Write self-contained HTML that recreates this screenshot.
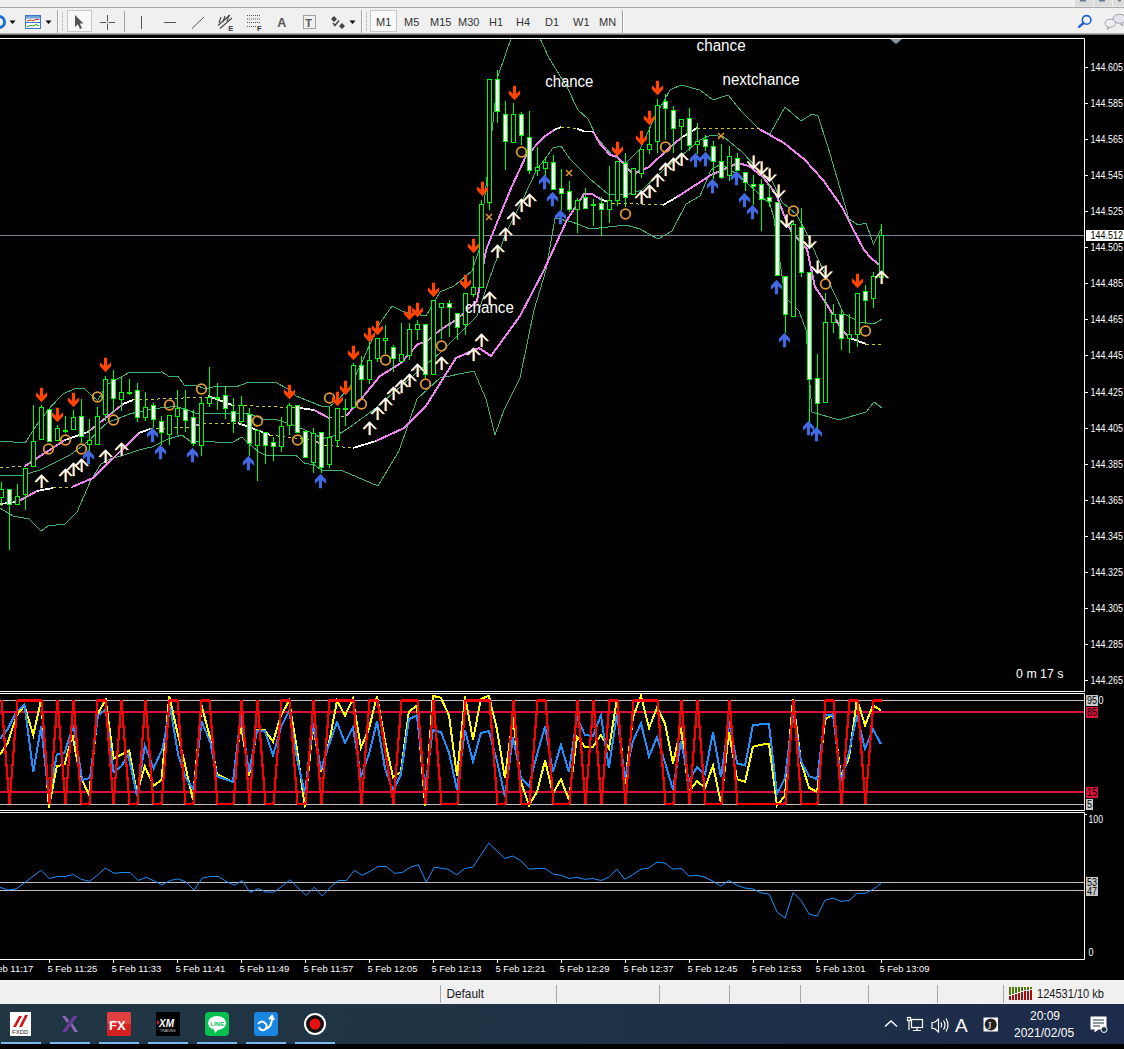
<!DOCTYPE html>
<html><head><meta charset="utf-8">
<style>
html,body{margin:0;padding:0;background:#000;width:1124px;height:1049px;overflow:hidden;position:relative;font-family:"Liberation Sans",sans-serif;}
.abs{position:absolute}
#tb{position:absolute;left:0;top:0;width:1124px;height:35px;background:#f0f0f0;}
#tb .topline{position:absolute;left:0;top:7px;width:1124px;height:1px;background:#a8a8a8}
#tb .bot{position:absolute;left:0;top:33px;width:1124px;height:2px;background:linear-gradient(#c8c8c8,#606060)}
.tf{position:absolute;top:16px;font-size:11px;color:#333;}
#chart{position:absolute;left:0;top:0}
.pl{position:absolute;left:1090px;font-size:10px;color:#fff;height:12px;line-height:12px;}
.tl{position:absolute;top:962px;font-size:10px;color:#fff;line-height:12px;white-space:nowrap}
.txt{position:absolute;color:#fff;font-size:16px;line-height:16px;white-space:nowrap}
#sb{position:absolute;left:0;top:980px;width:1124px;height:24px;background:#f0f0f0}
#sb .sep{position:absolute;top:5px;width:1px;height:18px;background:#a8a8a8}
#task{position:absolute;left:0;top:1004px;width:1124px;height:40px;background:linear-gradient(90deg,#213643 0%,#1f3346 50%,#1c2b4b 100%)}
</style></head><body>
<div id="tb">
  <div class="topline"></div>
  <div class="bot"></div>
  <svg class="abs" style="left:0;top:0" width="1124" height="35">
    <!-- left partial blue ring icon -->
    <circle cx="-1" cy="22" r="5.5" fill="none" stroke="#1f6fd0" stroke-width="3"/>
    <path d="M9.5,20.5h6l-3,3.5z" fill="#000"/>
    <!-- chart icon -->
    <rect x="25.5" y="15.5" width="15" height="13" fill="#fff" stroke="#3c78c8" stroke-width="1"/>
    <rect x="26" y="16" width="14" height="2.5" fill="#6fa0dc"/>
    <line x1="26" y1="22.5" x2="40" y2="22.5" stroke="#3c78c8" stroke-width="1"/>
    <polyline points="27,21 30,20 33,20.5 36,19.5 39,19.5" fill="none" stroke="#c03020" stroke-width="1"/>
    <polyline points="27,27 30,25.5 33,26 36,24.5 39,26" fill="none" stroke="#20a020" stroke-width="1"/>
    <path d="M45.5,20.5h6l-3,3.5z" fill="#000"/>
    <!-- separators -->
    <line x1="57.5" y1="10" x2="57.5" y2="33" stroke="#a0a0a0"/>
    <line x1="58.5" y1="10" x2="58.5" y2="33" stroke="#fff"/>
    <line x1="62.5" y1="12" x2="62.5" y2="31" stroke="#a8a8a8" stroke-dasharray="1,1"/>
    <rect x="67.5" y="10.5" width="24" height="21" fill="#f8f8f8" stroke="#c8c8c8"/>
    <path d="M75,15 L75,27 L77.8,24.3 L80,29 L82,28 L79.8,23.5 L83.5,23.5 Z" fill="#555"/>
    <path d="M100,22.5h15M107.5,15v15" stroke="#555" stroke-width="1"/>
    <rect x="106.5" y="21.5" width="2" height="2" fill="#f0f0f0"/>
    <line x1="124.5" y1="11" x2="124.5" y2="32" stroke="#a0a0a0"/>
    <line x1="141.5" y1="16" x2="141.5" y2="29" stroke="#555"/>
    <line x1="164" y1="22.5" x2="176" y2="22.5" stroke="#555"/>
    <line x1="192" y1="28.5" x2="204" y2="17" stroke="#555"/>
    <g stroke="#4a4a4a" stroke-width="1.2" fill="none">
      <path d="M218,25.5L230,15M220,28.5L232,18"/>
      <path d="M221,17l-2,6M225,16l-2,6M229,15l-2,6"/>
    </g>
    <text x="228.3" y="31" font-size="7.5" font-weight="bold" fill="#333" font-family="Liberation Sans">E</text>
    <g stroke="#555" stroke-width="1" stroke-dasharray="1,1">
      <line x1="247" y1="15.5" x2="260" y2="15.5"/><line x1="247" y1="19" x2="260" y2="19"/><line x1="247" y1="22.5" x2="260" y2="22.5"/><line x1="247" y1="26.5" x2="256" y2="26.5"/>
    </g>
    <text x="257" y="31" font-size="7.5" font-weight="bold" fill="#333" font-family="Liberation Sans">F</text>
    <text x="277.3" y="27.2" font-size="12.5" fill="#555" font-family="Liberation Sans" font-weight="bold">A</text>
    <rect x="303.5" y="15.5" width="12" height="13" fill="none" stroke="#555" stroke-dasharray="1,1"/>
    <text x="305.2" y="26.8" font-size="11" fill="#555" font-family="Liberation Sans" font-weight="bold">T</text>
    <path d="M334,16l3,3l-3,3l-3,-3z M342,23l3,3l-3,3l-3,-3z" fill="#444"/>
    <path d="M333,23l2,2.5l4,-5" fill="none" stroke="#444" stroke-width="1.5"/>
    <path d="M349.5,20.5h6l-3,3.5z" fill="#000"/>
    <line x1="361.5" y1="10" x2="361.5" y2="33" stroke="#a0a0a0"/>
    <line x1="362.5" y1="10" x2="362.5" y2="33" stroke="#fff"/>
    <line x1="366.5" y1="12" x2="366.5" y2="31" stroke="#a8a8a8" stroke-dasharray="1,1"/>
    <rect x="370.5" y="10.5" width="26" height="21" fill="#f8f8f8" stroke="#c8c8c8"/>
    <line x1="622.5" y1="10" x2="622.5" y2="33" stroke="#a0a0a0"/>
    <line x1="623.5" y1="10" x2="623.5" y2="33" stroke="#fff"/>
    <!-- window buttons -->
    <rect x="1075" y="0" width="18" height="6.5" fill="#dcdcdc"/>
    <rect x="1094" y="0" width="18" height="6.5" fill="#dcdcdc"/>
    <rect x="1113" y="0" width="11" height="6.5" fill="#dcdcdc"/>
    <rect x="1080" y="0" width="6" height="1.5" fill="#6a7a90"/>
    <rect x="1099" y="0" width="6" height="1.5" fill="#6a7a90"/>
    <rect x="1118" y="0" width="3" height="1.5" fill="#6a7a90"/>
    <!-- magnifier -->
    <circle cx="1086.6" cy="19.9" r="4.3" fill="none" stroke="#1f5fd6" stroke-width="1.6"/>
    <line x1="1083.5" y1="23" x2="1079" y2="26.8" stroke="#1f5fd6" stroke-width="2.4" stroke-linecap="round"/>
    <!-- chat bubbles -->
    <ellipse cx="1119.5" cy="18.8" rx="6.5" ry="4.5" fill="#e4e4ec" stroke="#a0a0a8"/>
    <path d="M1122,23l1,3l-3,-2" fill="#e4e4ec" stroke="#a0a0a8"/>
    <ellipse cx="1110.3" cy="23.2" rx="5.2" ry="4" fill="#f0f0f4" stroke="#a0a0a8"/>
    <path d="M1108,27l-1,2.5l3,-2" fill="#f0f0f4" stroke="#a0a0a8"/>
  </svg>
  <div class="tf" style="left:376px">M1</div>
  <div class="tf" style="left:404px">M5</div>
  <div class="tf" style="left:430px">M15</div>
  <div class="tf" style="left:458px">M30</div>
  <div class="tf" style="left:489px">H1</div>
  <div class="tf" style="left:516px">H4</div>
  <div class="tf" style="left:545px">D1</div>
  <div class="tf" style="left:573px">W1</div>
  <div class="tf" style="left:599px">MN</div>
</div>
<svg id="chart" width="1124" height="1049" viewBox="0 0 1124 1049">
<defs><clipPath id="cm"><rect x="0" y="39" width="1084" height="652"/></clipPath><clipPath id="c2"><rect x="0" y="694" width="1084" height="116"/></clipPath></defs>
<g clip-path="url(#cm)">
<line x1="0" y1="235.5" x2="1084" y2="235.5" stroke="#778899" stroke-width="1"/>
<polyline points="0,441 25,443 38,423 51.5,406 63,394 76,388 84,388 91,395 97.6,400.5 102.4,392.4 108,384 115,380 121.5,377 129,372.4 162,372 169,376.5 178,376.5 185,386 195,385 206,389 217,386 237,386.6 248,382.3 259,383 275.5,382.3 288,389 296,396 321,406 330,406 337,401 350,387 362,362 378,326 392,306 404,312 426,316 440,292 454,286 472,271 479,250 498,76 512,36 539,36 549,58 567,87 578,110 588,119 597,138 613,156 626,163 640,149 654,119 670,90 681,85 700,90 713,100 728,95 742,112 759,129 770,134 785,107 801,121 812,114 818,116 828,147 849,219 858,225 866,223 873.5,244 881,229" fill="none" stroke="#3cb371" stroke-width="1" shape-rendering="crispEdges"/>
<polyline points="0,475 20,476 40,470 70,455 89,441 98.6,430.5 108,422 119.6,418 131,413.4 140,412 152,408.7 176,406.5 185,409 195,413 217,413 237,413 250,414 264,419.5 275,419.5 288,423 298,427 311,432.6 322,438.4 330,437.2 341.5,432.6 350,427 376,408 408,380 440,353 477,316 489,280 506,233 523,199 537,169 545,159 553,148 561,146 570,159 574,163 590,179 608,194 626,195 642,190 663,170 681,156 700,140 711,135 724,137 742,152 757,168 772,181 782,202 797,215 808,236 817,257 844,314 860,322 874,324 882,319" fill="none" stroke="#3cb371" stroke-width="1" shape-rendering="crispEdges"/>
<polyline points="0,508 13,516 29,519 41,531 48,526 65,524 77,512 91,480 101,464 110,459 123.4,455.3 140,449.6 152,447 168,439 182,435 190,441 215,442 233,442 242,437 249.5,444 259,452 267,456 296,455.5 305,463.5 314,464.7 322,470.4 341.5,470.4 350,474 378,486 399,451 417,399 440,378 474,371 486,399 495,435 504,410 520,378 534,310 546,270 555,218 572,222 590,229 608,227 626,225 640,229 658,239 672,231 686,204 700,196 711,170 721,164 738,175 757,192 770,204 774,219 785,297 799,311 806,330 812,412 839,420 866,412 874,402 882,408" fill="none" stroke="#3cb371" stroke-width="1" shape-rendering="crispEdges"/>
<polyline points="0,468 25,466" fill="none" stroke="#c8c832" stroke-width="1" stroke-dasharray="3,3" shape-rendering="crispEdges"/>
<polyline points="25,466 65,440" fill="none" stroke="#ee82ee" stroke-width="2" shape-rendering="crispEdges"/>
<polyline points="65,440 88,432" fill="none" stroke="#ffffff" stroke-width="1.8" shape-rendering="crispEdges"/>
<polyline points="88,432 123,404" fill="none" stroke="#ee82ee" stroke-width="2" shape-rendering="crispEdges"/>
<polyline points="123,404 133,400" fill="none" stroke="#ffffff" stroke-width="1.8" shape-rendering="crispEdges"/>
<polyline points="133,400 208,397" fill="none" stroke="#c8c832" stroke-width="1" stroke-dasharray="3,3" shape-rendering="crispEdges"/>
<polyline points="208,396 232,405" fill="none" stroke="#ffffff" stroke-width="1.8" shape-rendering="crispEdges"/>
<polyline points="232,405 300,408" fill="none" stroke="#c8c832" stroke-width="1" stroke-dasharray="3,3" shape-rendering="crispEdges"/>
<polyline points="300,408 314,410" fill="none" stroke="#ffffff" stroke-width="1.8" shape-rendering="crispEdges"/>
<polyline points="314,410 329,418" fill="none" stroke="#ee82ee" stroke-width="2" shape-rendering="crispEdges"/>
<polyline points="329,418 346,416" fill="none" stroke="#c8c832" stroke-width="1" stroke-dasharray="3,3" shape-rendering="crispEdges"/>
<polyline points="346,416 362,398 380,376 401,363 418,344 426,342 440,330 456,320 464,313 477,301 486,250 498,220 512,186 526,156 544,137 554,130" fill="none" stroke="#ee82ee" stroke-width="2" shape-rendering="crispEdges"/>
<polyline points="554,130 561,127" fill="none" stroke="#ffffff" stroke-width="1.8" shape-rendering="crispEdges"/>
<polyline points="561,127 577,128.6" fill="none" stroke="#c8c832" stroke-width="1" stroke-dasharray="3,3" shape-rendering="crispEdges"/>
<polyline points="577,128.6 584,131.5 593,131.5" fill="none" stroke="#ffffff" stroke-width="1.8" shape-rendering="crispEdges"/>
<polyline points="593,131.5 600.5,144.4 610,155 617,156.4 633,174 649,167 668,149 681,138" fill="none" stroke="#ee82ee" stroke-width="2" shape-rendering="crispEdges"/>
<polyline points="681,138 697,128" fill="none" stroke="#ffffff" stroke-width="1.8" shape-rendering="crispEdges"/>
<polyline points="697,128 760,128" fill="none" stroke="#c8c832" stroke-width="1" stroke-dasharray="3,3" shape-rendering="crispEdges"/>
<polyline points="759,129 784,143 805,160 823,180 842,207 851,225 864,250 871,258 882,267" fill="none" stroke="#ee82ee" stroke-width="2" shape-rendering="crispEdges"/>
<polyline points="0,504 17,502" fill="none" stroke="#ffffff" stroke-width="1.8" shape-rendering="crispEdges"/>
<polyline points="17,502 37,491" fill="none" stroke="#ee82ee" stroke-width="2" shape-rendering="crispEdges"/>
<polyline points="37,491 53,488" fill="none" stroke="#ffffff" stroke-width="1.8" shape-rendering="crispEdges"/>
<polyline points="53,488 72,487" fill="none" stroke="#c8c832" stroke-width="1" stroke-dasharray="3,3" shape-rendering="crispEdges"/>
<polyline points="72,487 93,478 139,433" fill="none" stroke="#ee82ee" stroke-width="2" shape-rendering="crispEdges"/>
<polyline points="139,433 150,429" fill="none" stroke="#ffffff" stroke-width="1.8" shape-rendering="crispEdges"/>
<polyline points="150,429 192,427" fill="none" stroke="#c8c832" stroke-width="1" stroke-dasharray="3,3" shape-rendering="crispEdges"/>
<polyline points="192,427 203,423" fill="none" stroke="#ee82ee" stroke-width="2" shape-rendering="crispEdges"/>
<polyline points="203,423 238,423" fill="none" stroke="#c8c832" stroke-width="1" stroke-dasharray="3,3" shape-rendering="crispEdges"/>
<polyline points="238,423 270,435" fill="none" stroke="#ffffff" stroke-width="1.8" shape-rendering="crispEdges"/>
<polyline points="270,435 312,440" fill="none" stroke="#c8c832" stroke-width="1" stroke-dasharray="3,3" shape-rendering="crispEdges"/>
<polyline points="312,440 324,445" fill="none" stroke="#ee82ee" stroke-width="2" shape-rendering="crispEdges"/>
<polyline points="324,445 353,448" fill="none" stroke="#c8c832" stroke-width="1" stroke-dasharray="3,3" shape-rendering="crispEdges"/>
<polyline points="353,448 376,441" fill="none" stroke="#ffffff" stroke-width="1.8" shape-rendering="crispEdges"/>
<polyline points="376,441 404,428 426,406 456,358 479,348 491,356 520,316 544,270 567,220 584,194 592,194 602,200" fill="none" stroke="#ee82ee" stroke-width="2" shape-rendering="crispEdges"/>
<polyline points="602,200 610,202" fill="none" stroke="#ffffff" stroke-width="1.8" shape-rendering="crispEdges"/>
<polyline points="612,203 663,205" fill="none" stroke="#c8c832" stroke-width="1" stroke-dasharray="3,3" shape-rendering="crispEdges"/>
<polyline points="663,205 677,197" fill="none" stroke="#ffffff" stroke-width="1.8" shape-rendering="crispEdges"/>
<polyline points="677,197 711,175 738,163 749,166 763,177 776,194 784,215 791,231 807,249 815,287 826,303 842,330 850,338" fill="none" stroke="#ee82ee" stroke-width="2" shape-rendering="crispEdges"/>
<polyline points="850,338 866,344" fill="none" stroke="#ffffff" stroke-width="1.8" shape-rendering="crispEdges"/>
<polyline points="866,344 882,344" fill="none" stroke="#c8c832" stroke-width="1" stroke-dasharray="3,3" shape-rendering="crispEdges"/>
<line x1="1.5" y1="482" x2="1.5" y2="506" stroke="#00ff00" stroke-width="1"/>
<rect x="-0.5" y="489.5" width="4" height="8" fill="#000000" stroke="#00ff00" stroke-width="1"/>
<line x1="9.5" y1="489" x2="9.5" y2="550" stroke="#00ff00" stroke-width="1"/>
<rect x="7.5" y="489.5" width="4" height="15" fill="#ffffff" stroke="#00ff00" stroke-width="1"/>
<line x1="17.5" y1="484" x2="17.5" y2="505" stroke="#00ff00" stroke-width="1"/>
<rect x="15.5" y="496.5" width="4" height="8" fill="#000000" stroke="#00ff00" stroke-width="1"/>
<line x1="25.5" y1="468" x2="25.5" y2="510" stroke="#00ff00" stroke-width="1"/>
<rect x="23.5" y="468.5" width="4" height="26" fill="#000000" stroke="#00ff00" stroke-width="1"/>
<line x1="33.5" y1="405" x2="33.5" y2="467" stroke="#00ff00" stroke-width="1"/>
<rect x="31.5" y="441.5" width="4" height="25" fill="#000000" stroke="#00ff00" stroke-width="1"/>
<line x1="41.5" y1="405" x2="41.5" y2="440" stroke="#00ff00" stroke-width="1"/>
<rect x="39.5" y="407.5" width="4" height="32" fill="#000000" stroke="#00ff00" stroke-width="1"/>
<line x1="49.5" y1="409" x2="49.5" y2="442" stroke="#00ff00" stroke-width="1"/>
<rect x="47.5" y="409.5" width="4" height="32" fill="#ffffff" stroke="#00ff00" stroke-width="1"/>
<line x1="57.5" y1="425" x2="57.5" y2="441" stroke="#00ff00" stroke-width="1"/>
<rect x="55.5" y="428.5" width="4" height="12" fill="#000000" stroke="#00ff00" stroke-width="1"/>
<line x1="65.5" y1="416" x2="65.5" y2="433" stroke="#00ff00" stroke-width="1"/>
<rect x="63.5" y="430.5" width="4" height="1" fill="#000000" stroke="#00ff00" stroke-width="1"/>
<line x1="73.5" y1="410" x2="73.5" y2="430" stroke="#00ff00" stroke-width="1"/>
<rect x="71.5" y="417.5" width="4" height="12" fill="#000000" stroke="#00ff00" stroke-width="1"/>
<line x1="81.5" y1="399" x2="81.5" y2="443" stroke="#00ff00" stroke-width="1"/>
<rect x="79.5" y="416.5" width="4" height="20" fill="#ffffff" stroke="#00ff00" stroke-width="1"/>
<line x1="89.5" y1="419" x2="89.5" y2="452" stroke="#00ff00" stroke-width="1"/>
<rect x="87.5" y="440.5" width="4" height="4" fill="#000000" stroke="#00ff00" stroke-width="1"/>
<line x1="97.5" y1="407" x2="97.5" y2="445" stroke="#00ff00" stroke-width="1"/>
<rect x="95.5" y="416.5" width="4" height="28" fill="#000000" stroke="#00ff00" stroke-width="1"/>
<line x1="105.5" y1="376" x2="105.5" y2="421" stroke="#00ff00" stroke-width="1"/>
<rect x="103.5" y="379.5" width="4" height="35" fill="#000000" stroke="#00ff00" stroke-width="1"/>
<line x1="113.5" y1="370" x2="113.5" y2="413" stroke="#00ff00" stroke-width="1"/>
<rect x="111.5" y="379.5" width="4" height="19" fill="#ffffff" stroke="#00ff00" stroke-width="1"/>
<line x1="121.5" y1="378" x2="121.5" y2="411" stroke="#00ff00" stroke-width="1"/>
<rect x="119.5" y="392.5" width="4" height="7" fill="#000000" stroke="#00ff00" stroke-width="1"/>
<line x1="129.5" y1="379" x2="129.5" y2="395" stroke="#00ff00" stroke-width="1"/>
<rect x="127.5" y="392.5" width="4" height="1" fill="#000000" stroke="#00ff00" stroke-width="1"/>
<line x1="137.5" y1="383" x2="137.5" y2="422" stroke="#00ff00" stroke-width="1"/>
<rect x="135.5" y="390.5" width="4" height="27" fill="#ffffff" stroke="#00ff00" stroke-width="1"/>
<line x1="145.5" y1="392" x2="145.5" y2="421" stroke="#00ff00" stroke-width="1"/>
<rect x="143.5" y="407.5" width="4" height="10" fill="#000000" stroke="#00ff00" stroke-width="1"/>
<line x1="153.5" y1="403" x2="153.5" y2="428" stroke="#00ff00" stroke-width="1"/>
<rect x="151.5" y="405.5" width="4" height="14" fill="#ffffff" stroke="#00ff00" stroke-width="1"/>
<line x1="161.5" y1="416" x2="161.5" y2="445" stroke="#00ff00" stroke-width="1"/>
<rect x="159.5" y="421.5" width="4" height="11" fill="#ffffff" stroke="#00ff00" stroke-width="1"/>
<line x1="169.5" y1="415" x2="169.5" y2="445" stroke="#00ff00" stroke-width="1"/>
<rect x="167.5" y="415.5" width="4" height="19" fill="#000000" stroke="#00ff00" stroke-width="1"/>
<line x1="177.5" y1="390" x2="177.5" y2="435" stroke="#00ff00" stroke-width="1"/>
<rect x="175.5" y="408.5" width="4" height="8" fill="#000000" stroke="#00ff00" stroke-width="1"/>
<line x1="185.5" y1="390" x2="185.5" y2="432" stroke="#00ff00" stroke-width="1"/>
<rect x="183.5" y="409.5" width="4" height="11" fill="#ffffff" stroke="#00ff00" stroke-width="1"/>
<line x1="193.5" y1="410" x2="193.5" y2="446" stroke="#00ff00" stroke-width="1"/>
<rect x="191.5" y="417.5" width="4" height="26" fill="#ffffff" stroke="#00ff00" stroke-width="1"/>
<line x1="201.5" y1="398" x2="201.5" y2="456" stroke="#00ff00" stroke-width="1"/>
<rect x="199.5" y="403.5" width="4" height="42" fill="#000000" stroke="#00ff00" stroke-width="1"/>
<line x1="209.5" y1="367" x2="209.5" y2="407" stroke="#00ff00" stroke-width="1"/>
<rect x="207.5" y="397.5" width="4" height="6" fill="#000000" stroke="#00ff00" stroke-width="1"/>
<line x1="217.5" y1="383" x2="217.5" y2="410" stroke="#00ff00" stroke-width="1"/>
<rect x="215.5" y="397.5" width="4" height="1" fill="#000000" stroke="#00ff00" stroke-width="1"/>
<line x1="225.5" y1="387" x2="225.5" y2="419" stroke="#00ff00" stroke-width="1"/>
<rect x="223.5" y="395.5" width="4" height="13" fill="#ffffff" stroke="#00ff00" stroke-width="1"/>
<line x1="233.5" y1="398" x2="233.5" y2="433" stroke="#00ff00" stroke-width="1"/>
<rect x="231.5" y="411.5" width="4" height="10" fill="#ffffff" stroke="#00ff00" stroke-width="1"/>
<line x1="241.5" y1="396" x2="241.5" y2="425" stroke="#00ff00" stroke-width="1"/>
<rect x="239.5" y="405.5" width="4" height="16" fill="#000000" stroke="#00ff00" stroke-width="1"/>
<line x1="249.5" y1="408" x2="249.5" y2="456" stroke="#00ff00" stroke-width="1"/>
<rect x="247.5" y="414.5" width="4" height="29" fill="#ffffff" stroke="#00ff00" stroke-width="1"/>
<line x1="257.5" y1="429" x2="257.5" y2="481" stroke="#00ff00" stroke-width="1"/>
<rect x="255.5" y="430.5" width="4" height="15" fill="#000000" stroke="#00ff00" stroke-width="1"/>
<line x1="265.5" y1="432" x2="265.5" y2="464" stroke="#00ff00" stroke-width="1"/>
<rect x="263.5" y="432.5" width="4" height="13" fill="#ffffff" stroke="#00ff00" stroke-width="1"/>
<line x1="273.5" y1="437" x2="273.5" y2="461" stroke="#00ff00" stroke-width="1"/>
<rect x="271.5" y="442.5" width="4" height="4" fill="#ffffff" stroke="#00ff00" stroke-width="1"/>
<line x1="281.5" y1="417" x2="281.5" y2="452" stroke="#00ff00" stroke-width="1"/>
<rect x="279.5" y="426.5" width="4" height="20" fill="#000000" stroke="#00ff00" stroke-width="1"/>
<line x1="289.5" y1="403" x2="289.5" y2="435" stroke="#00ff00" stroke-width="1"/>
<rect x="287.5" y="405.5" width="4" height="20" fill="#000000" stroke="#00ff00" stroke-width="1"/>
<line x1="297.5" y1="405" x2="297.5" y2="433" stroke="#00ff00" stroke-width="1"/>
<rect x="295.5" y="405.5" width="4" height="27" fill="#ffffff" stroke="#00ff00" stroke-width="1"/>
<line x1="305.5" y1="431" x2="305.5" y2="458" stroke="#00ff00" stroke-width="1"/>
<rect x="303.5" y="431.5" width="4" height="26" fill="#ffffff" stroke="#00ff00" stroke-width="1"/>
<line x1="313.5" y1="428" x2="313.5" y2="473" stroke="#00ff00" stroke-width="1"/>
<rect x="311.5" y="433.5" width="4" height="29" fill="#000000" stroke="#00ff00" stroke-width="1"/>
<line x1="321.5" y1="432" x2="321.5" y2="473" stroke="#00ff00" stroke-width="1"/>
<rect x="319.5" y="432.5" width="4" height="35" fill="#ffffff" stroke="#00ff00" stroke-width="1"/>
<line x1="329.5" y1="407" x2="329.5" y2="468" stroke="#00ff00" stroke-width="1"/>
<rect x="327.5" y="437.5" width="4" height="27" fill="#000000" stroke="#00ff00" stroke-width="1"/>
<line x1="337.5" y1="408" x2="337.5" y2="447" stroke="#00ff00" stroke-width="1"/>
<rect x="335.5" y="408.5" width="4" height="32" fill="#000000" stroke="#00ff00" stroke-width="1"/>
<line x1="345.5" y1="399" x2="345.5" y2="426" stroke="#00ff00" stroke-width="1"/>
<rect x="343.5" y="408.5" width="4" height="1" fill="#000000" stroke="#00ff00" stroke-width="1"/>
<line x1="353.5" y1="363" x2="353.5" y2="408" stroke="#00ff00" stroke-width="1"/>
<rect x="351.5" y="365.5" width="4" height="42" fill="#000000" stroke="#00ff00" stroke-width="1"/>
<line x1="361.5" y1="356" x2="361.5" y2="397" stroke="#00ff00" stroke-width="1"/>
<rect x="359.5" y="365.5" width="4" height="14" fill="#ffffff" stroke="#00ff00" stroke-width="1"/>
<line x1="369.5" y1="342" x2="369.5" y2="384" stroke="#00ff00" stroke-width="1"/>
<rect x="367.5" y="360.5" width="4" height="19" fill="#000000" stroke="#00ff00" stroke-width="1"/>
<line x1="377.5" y1="338" x2="377.5" y2="362" stroke="#00ff00" stroke-width="1"/>
<rect x="375.5" y="338.5" width="4" height="20" fill="#000000" stroke="#00ff00" stroke-width="1"/>
<line x1="385.5" y1="325" x2="385.5" y2="354" stroke="#00ff00" stroke-width="1"/>
<rect x="383.5" y="338.5" width="4" height="2" fill="#000000" stroke="#00ff00" stroke-width="1"/>
<line x1="393.5" y1="345" x2="393.5" y2="372" stroke="#00ff00" stroke-width="1"/>
<rect x="391.5" y="347.5" width="4" height="11" fill="#ffffff" stroke="#00ff00" stroke-width="1"/>
<line x1="401.5" y1="323" x2="401.5" y2="362" stroke="#00ff00" stroke-width="1"/>
<rect x="399.5" y="354.5" width="4" height="7" fill="#000000" stroke="#00ff00" stroke-width="1"/>
<line x1="409.5" y1="323" x2="409.5" y2="360" stroke="#00ff00" stroke-width="1"/>
<rect x="407.5" y="329.5" width="4" height="26" fill="#000000" stroke="#00ff00" stroke-width="1"/>
<line x1="417.5" y1="320" x2="417.5" y2="340" stroke="#00ff00" stroke-width="1"/>
<rect x="415.5" y="324.5" width="4" height="5" fill="#000000" stroke="#00ff00" stroke-width="1"/>
<line x1="425.5" y1="324" x2="425.5" y2="378" stroke="#00ff00" stroke-width="1"/>
<rect x="423.5" y="324.5" width="4" height="50" fill="#ffffff" stroke="#00ff00" stroke-width="1"/>
<line x1="433.5" y1="300" x2="433.5" y2="375" stroke="#00ff00" stroke-width="1"/>
<rect x="431.5" y="300.5" width="4" height="74" fill="#000000" stroke="#00ff00" stroke-width="1"/>
<line x1="441.5" y1="303" x2="441.5" y2="339" stroke="#00ff00" stroke-width="1"/>
<rect x="439.5" y="303.5" width="4" height="4" fill="#000000" stroke="#00ff00" stroke-width="1"/>
<line x1="449.5" y1="300" x2="449.5" y2="337" stroke="#00ff00" stroke-width="1"/>
<rect x="447.5" y="303.5" width="4" height="4" fill="#ffffff" stroke="#00ff00" stroke-width="1"/>
<line x1="457.5" y1="313" x2="457.5" y2="340" stroke="#00ff00" stroke-width="1"/>
<rect x="455.5" y="313.5" width="4" height="14" fill="#ffffff" stroke="#00ff00" stroke-width="1"/>
<line x1="465.5" y1="293" x2="465.5" y2="335" stroke="#00ff00" stroke-width="1"/>
<rect x="463.5" y="293.5" width="4" height="31" fill="#000000" stroke="#00ff00" stroke-width="1"/>
<line x1="473.5" y1="256" x2="473.5" y2="297" stroke="#00ff00" stroke-width="1"/>
<rect x="471.5" y="287.5" width="4" height="7" fill="#000000" stroke="#00ff00" stroke-width="1"/>
<line x1="481.5" y1="200" x2="481.5" y2="288" stroke="#00ff00" stroke-width="1"/>
<rect x="479.5" y="204.5" width="4" height="83" fill="#000000" stroke="#00ff00" stroke-width="1"/>
<line x1="489.5" y1="79" x2="489.5" y2="210" stroke="#00ff00" stroke-width="1"/>
<rect x="487.5" y="79.5" width="4" height="123" fill="#000000" stroke="#00ff00" stroke-width="1"/>
<line x1="497.5" y1="70" x2="497.5" y2="123" stroke="#00ff00" stroke-width="1"/>
<rect x="495.5" y="79.5" width="4" height="32" fill="#ffffff" stroke="#00ff00" stroke-width="1"/>
<line x1="505.5" y1="101" x2="505.5" y2="170" stroke="#00ff00" stroke-width="1"/>
<rect x="503.5" y="114.5" width="4" height="27" fill="#ffffff" stroke="#00ff00" stroke-width="1"/>
<line x1="513.5" y1="103" x2="513.5" y2="143" stroke="#00ff00" stroke-width="1"/>
<rect x="511.5" y="114.5" width="4" height="28" fill="#000000" stroke="#00ff00" stroke-width="1"/>
<line x1="521.5" y1="112" x2="521.5" y2="145" stroke="#00ff00" stroke-width="1"/>
<rect x="519.5" y="114.5" width="4" height="21" fill="#ffffff" stroke="#00ff00" stroke-width="1"/>
<line x1="529.5" y1="111" x2="529.5" y2="174" stroke="#00ff00" stroke-width="1"/>
<rect x="527.5" y="137.5" width="4" height="33" fill="#ffffff" stroke="#00ff00" stroke-width="1"/>
<line x1="537.5" y1="147" x2="537.5" y2="176" stroke="#00ff00" stroke-width="1"/>
<rect x="535.5" y="167.5" width="4" height="3" fill="#000000" stroke="#00ff00" stroke-width="1"/>
<line x1="545.5" y1="157" x2="545.5" y2="176" stroke="#00ff00" stroke-width="1"/>
<rect x="543.5" y="162.5" width="4" height="6" fill="#000000" stroke="#00ff00" stroke-width="1"/>
<line x1="553.5" y1="155" x2="553.5" y2="190" stroke="#00ff00" stroke-width="1"/>
<rect x="551.5" y="162.5" width="4" height="27" fill="#ffffff" stroke="#00ff00" stroke-width="1"/>
<line x1="561.5" y1="169" x2="561.5" y2="210" stroke="#00ff00" stroke-width="1"/>
<rect x="559.5" y="188.5" width="4" height="5" fill="#ffffff" stroke="#00ff00" stroke-width="1"/>
<line x1="569.5" y1="181" x2="569.5" y2="212" stroke="#00ff00" stroke-width="1"/>
<rect x="567.5" y="191.5" width="4" height="18" fill="#ffffff" stroke="#00ff00" stroke-width="1"/>
<line x1="577.5" y1="198" x2="577.5" y2="233" stroke="#00ff00" stroke-width="1"/>
<rect x="575.5" y="200.5" width="4" height="9" fill="#000000" stroke="#00ff00" stroke-width="1"/>
<line x1="585.5" y1="188" x2="585.5" y2="209" stroke="#00ff00" stroke-width="1"/>
<rect x="583.5" y="197.5" width="4" height="11" fill="#ffffff" stroke="#00ff00" stroke-width="1"/>
<line x1="593.5" y1="199" x2="593.5" y2="226" stroke="#00ff00" stroke-width="1"/>
<rect x="591.5" y="204.5" width="4" height="1" fill="#000000" stroke="#00ff00" stroke-width="1"/>
<line x1="601.5" y1="197" x2="601.5" y2="236" stroke="#00ff00" stroke-width="1"/>
<rect x="599.5" y="203.5" width="4" height="6" fill="#ffffff" stroke="#00ff00" stroke-width="1"/>
<line x1="609.5" y1="166" x2="609.5" y2="223" stroke="#00ff00" stroke-width="1"/>
<rect x="607.5" y="200.5" width="4" height="9" fill="#000000" stroke="#00ff00" stroke-width="1"/>
<line x1="617.5" y1="161" x2="617.5" y2="206" stroke="#00ff00" stroke-width="1"/>
<rect x="615.5" y="161.5" width="4" height="39" fill="#000000" stroke="#00ff00" stroke-width="1"/>
<line x1="625.5" y1="153" x2="625.5" y2="207" stroke="#00ff00" stroke-width="1"/>
<rect x="623.5" y="163.5" width="4" height="34" fill="#ffffff" stroke="#00ff00" stroke-width="1"/>
<line x1="633.5" y1="168" x2="633.5" y2="195" stroke="#00ff00" stroke-width="1"/>
<rect x="631.5" y="168.5" width="4" height="26" fill="#000000" stroke="#00ff00" stroke-width="1"/>
<line x1="641.5" y1="149" x2="641.5" y2="178" stroke="#00ff00" stroke-width="1"/>
<rect x="639.5" y="149.5" width="4" height="24" fill="#000000" stroke="#00ff00" stroke-width="1"/>
<line x1="649.5" y1="127" x2="649.5" y2="154" stroke="#00ff00" stroke-width="1"/>
<rect x="647.5" y="144.5" width="4" height="5" fill="#000000" stroke="#00ff00" stroke-width="1"/>
<line x1="657.5" y1="99" x2="657.5" y2="153" stroke="#00ff00" stroke-width="1"/>
<rect x="655.5" y="105.5" width="4" height="36" fill="#000000" stroke="#00ff00" stroke-width="1"/>
<line x1="665.5" y1="94" x2="665.5" y2="140" stroke="#00ff00" stroke-width="1"/>
<rect x="663.5" y="101.5" width="4" height="7" fill="#ffffff" stroke="#00ff00" stroke-width="1"/>
<line x1="673.5" y1="106" x2="673.5" y2="153" stroke="#00ff00" stroke-width="1"/>
<rect x="671.5" y="110.5" width="4" height="18" fill="#ffffff" stroke="#00ff00" stroke-width="1"/>
<line x1="681.5" y1="119" x2="681.5" y2="150" stroke="#00ff00" stroke-width="1"/>
<rect x="679.5" y="119.5" width="4" height="7" fill="#000000" stroke="#00ff00" stroke-width="1"/>
<line x1="689.5" y1="108" x2="689.5" y2="151" stroke="#00ff00" stroke-width="1"/>
<rect x="687.5" y="118.5" width="4" height="27" fill="#ffffff" stroke="#00ff00" stroke-width="1"/>
<line x1="697.5" y1="123" x2="697.5" y2="154" stroke="#00ff00" stroke-width="1"/>
<rect x="695.5" y="141.5" width="4" height="3" fill="#000000" stroke="#00ff00" stroke-width="1"/>
<line x1="705.5" y1="135" x2="705.5" y2="151" stroke="#00ff00" stroke-width="1"/>
<rect x="703.5" y="139.5" width="4" height="7" fill="#ffffff" stroke="#00ff00" stroke-width="1"/>
<line x1="713.5" y1="141" x2="713.5" y2="179" stroke="#00ff00" stroke-width="1"/>
<rect x="711.5" y="146.5" width="4" height="15" fill="#ffffff" stroke="#00ff00" stroke-width="1"/>
<line x1="721.5" y1="144" x2="721.5" y2="179" stroke="#00ff00" stroke-width="1"/>
<rect x="719.5" y="161.5" width="4" height="16" fill="#ffffff" stroke="#00ff00" stroke-width="1"/>
<line x1="729.5" y1="146" x2="729.5" y2="181" stroke="#00ff00" stroke-width="1"/>
<rect x="727.5" y="156.5" width="4" height="19" fill="#000000" stroke="#00ff00" stroke-width="1"/>
<line x1="737.5" y1="153" x2="737.5" y2="171" stroke="#00ff00" stroke-width="1"/>
<rect x="735.5" y="158.5" width="4" height="12" fill="#ffffff" stroke="#00ff00" stroke-width="1"/>
<line x1="745.5" y1="172" x2="745.5" y2="191" stroke="#00ff00" stroke-width="1"/>
<rect x="743.5" y="172.5" width="4" height="10" fill="#ffffff" stroke="#00ff00" stroke-width="1"/>
<line x1="753.5" y1="175" x2="753.5" y2="205" stroke="#00ff00" stroke-width="1"/>
<rect x="751.5" y="184.5" width="4" height="2" fill="#ffffff" stroke="#00ff00" stroke-width="1"/>
<line x1="761.5" y1="179" x2="761.5" y2="231" stroke="#00ff00" stroke-width="1"/>
<rect x="759.5" y="184.5" width="4" height="15" fill="#ffffff" stroke="#00ff00" stroke-width="1"/>
<line x1="769.5" y1="184" x2="769.5" y2="207" stroke="#00ff00" stroke-width="1"/>
<rect x="767.5" y="197.5" width="4" height="4" fill="#ffffff" stroke="#00ff00" stroke-width="1"/>
<line x1="777.5" y1="202" x2="777.5" y2="276" stroke="#00ff00" stroke-width="1"/>
<rect x="775.5" y="202.5" width="4" height="73" fill="#ffffff" stroke="#00ff00" stroke-width="1"/>
<line x1="785.5" y1="276" x2="785.5" y2="333" stroke="#00ff00" stroke-width="1"/>
<rect x="783.5" y="276.5" width="4" height="38" fill="#ffffff" stroke="#00ff00" stroke-width="1"/>
<line x1="793.5" y1="220" x2="793.5" y2="317" stroke="#00ff00" stroke-width="1"/>
<rect x="791.5" y="224.5" width="4" height="92" fill="#000000" stroke="#00ff00" stroke-width="1"/>
<line x1="801.5" y1="208" x2="801.5" y2="277" stroke="#00ff00" stroke-width="1"/>
<rect x="799.5" y="227.5" width="4" height="45" fill="#ffffff" stroke="#00ff00" stroke-width="1"/>
<line x1="809.5" y1="272" x2="809.5" y2="423" stroke="#00ff00" stroke-width="1"/>
<rect x="807.5" y="272.5" width="4" height="107" fill="#ffffff" stroke="#00ff00" stroke-width="1"/>
<line x1="817.5" y1="354" x2="817.5" y2="438" stroke="#00ff00" stroke-width="1"/>
<rect x="815.5" y="378.5" width="4" height="25" fill="#ffffff" stroke="#00ff00" stroke-width="1"/>
<line x1="825.5" y1="293" x2="825.5" y2="403" stroke="#00ff00" stroke-width="1"/>
<rect x="823.5" y="322.5" width="4" height="80" fill="#000000" stroke="#00ff00" stroke-width="1"/>
<line x1="833.5" y1="304" x2="833.5" y2="333" stroke="#00ff00" stroke-width="1"/>
<rect x="831.5" y="314.5" width="4" height="8" fill="#000000" stroke="#00ff00" stroke-width="1"/>
<line x1="841.5" y1="310" x2="841.5" y2="350" stroke="#00ff00" stroke-width="1"/>
<rect x="839.5" y="314.5" width="4" height="24" fill="#ffffff" stroke="#00ff00" stroke-width="1"/>
<line x1="849.5" y1="314" x2="849.5" y2="353" stroke="#00ff00" stroke-width="1"/>
<rect x="847.5" y="334.5" width="4" height="4" fill="#000000" stroke="#00ff00" stroke-width="1"/>
<line x1="857.5" y1="293" x2="857.5" y2="347" stroke="#00ff00" stroke-width="1"/>
<rect x="855.5" y="293.5" width="4" height="41" fill="#000000" stroke="#00ff00" stroke-width="1"/>
<line x1="865.5" y1="285" x2="865.5" y2="324" stroke="#00ff00" stroke-width="1"/>
<rect x="863.5" y="291.5" width="4" height="9" fill="#ffffff" stroke="#00ff00" stroke-width="1"/>
<line x1="873.5" y1="272" x2="873.5" y2="308" stroke="#00ff00" stroke-width="1"/>
<rect x="871.5" y="276.5" width="4" height="22" fill="#000000" stroke="#00ff00" stroke-width="1"/>
<line x1="881.5" y1="224" x2="881.5" y2="278" stroke="#00ff00" stroke-width="1"/>
<rect x="879.5" y="235.5" width="4" height="42" fill="#000000" stroke="#00ff00" stroke-width="1"/>
<circle cx="48.5" cy="449" r="4.8" fill="none" stroke="#e39a35" stroke-width="1.8"/>
<circle cx="65.5" cy="440" r="4.8" fill="none" stroke="#e39a35" stroke-width="1.8"/>
<circle cx="81.5" cy="449" r="4.8" fill="none" stroke="#e39a35" stroke-width="1.8"/>
<circle cx="97.5" cy="397" r="4.8" fill="none" stroke="#e39a35" stroke-width="1.8"/>
<circle cx="113.5" cy="420" r="4.8" fill="none" stroke="#e39a35" stroke-width="1.8"/>
<circle cx="169.5" cy="405" r="4.8" fill="none" stroke="#e39a35" stroke-width="1.8"/>
<circle cx="201.5" cy="389" r="4.8" fill="none" stroke="#e39a35" stroke-width="1.8"/>
<circle cx="257.5" cy="421" r="4.8" fill="none" stroke="#e39a35" stroke-width="1.8"/>
<circle cx="297.5" cy="440" r="4.8" fill="none" stroke="#e39a35" stroke-width="1.8"/>
<circle cx="329.5" cy="398" r="4.8" fill="none" stroke="#e39a35" stroke-width="1.8"/>
<circle cx="361.5" cy="404" r="4.8" fill="none" stroke="#e39a35" stroke-width="1.8"/>
<circle cx="385.5" cy="360" r="4.8" fill="none" stroke="#e39a35" stroke-width="1.8"/>
<circle cx="425.5" cy="384" r="4.8" fill="none" stroke="#e39a35" stroke-width="1.8"/>
<circle cx="441.5" cy="346" r="4.8" fill="none" stroke="#e39a35" stroke-width="1.8"/>
<circle cx="521.5" cy="152" r="4.8" fill="none" stroke="#e39a35" stroke-width="1.8"/>
<circle cx="625.5" cy="214" r="4.8" fill="none" stroke="#e39a35" stroke-width="1.8"/>
<circle cx="665.5" cy="147" r="4.8" fill="none" stroke="#e39a35" stroke-width="1.8"/>
<circle cx="793.5" cy="211" r="4.8" fill="none" stroke="#e39a35" stroke-width="1.8"/>
<circle cx="825.5" cy="284" r="4.8" fill="none" stroke="#e39a35" stroke-width="1.8"/>
<circle cx="865.5" cy="331" r="4.8" fill="none" stroke="#e39a35" stroke-width="1.8"/>
<path d="M486,214L492,220M492,214L486,220" stroke="#e0962a" stroke-width="1.5"/>
<path d="M566,170L572,176M572,170L566,176" stroke="#e0962a" stroke-width="1.5"/>
<path d="M718,133L724,139M724,133L718,139" stroke="#e0962a" stroke-width="1.5"/>
<path d="M757,168L763,174M763,168L757,174" stroke="#e0962a" stroke-width="1.5"/>
<polygon points="473.5,253.2 479.1,247.3 479.1,243.3 475.1,246.8 475.1,238.8 471.9,238.8 471.9,246.8 467.9,243.3 467.9,247.3" fill="#ff4500"/>
<polygon points="41.5,402.2 47.1,396.3 47.1,392.3 43.1,395.8 43.1,387.8 39.9,387.8 39.9,395.8 35.9,392.3 35.9,396.3" fill="#ff4500"/>
<polygon points="57.5,422.2 63.1,416.3 63.1,412.3 59.1,415.8 59.1,407.8 55.9,407.8 55.9,415.8 51.9,412.3 51.9,416.3" fill="#ff4500"/>
<polygon points="73.5,407.2 79.1,401.3 79.1,397.3 75.1,400.8 75.1,392.8 71.9,392.8 71.9,400.8 67.9,397.3 67.9,401.3" fill="#ff4500"/>
<polygon points="105.5,372.2 111.1,366.3 111.1,362.3 107.1,365.8 107.1,357.8 103.9,357.8 103.9,365.8 99.9,362.3 99.9,366.3" fill="#ff4500"/>
<polygon points="289.5,399.2 295.1,393.3 295.1,389.3 291.1,392.8 291.1,384.8 287.9,384.8 287.9,392.8 283.9,389.3 283.9,393.3" fill="#ff4500"/>
<polygon points="337.5,406.2 343.1,400.3 343.1,396.3 339.1,399.8 339.1,391.8 335.9,391.8 335.9,399.8 331.9,396.3 331.9,400.3" fill="#ff4500"/>
<polygon points="345.5,395.2 351.1,389.3 351.1,385.3 347.1,388.8 347.1,380.8 343.9,380.8 343.9,388.8 339.9,385.3 339.9,389.3" fill="#ff4500"/>
<polygon points="353.5,360.2 359.1,354.3 359.1,350.3 355.1,353.8 355.1,345.8 351.9,345.8 351.9,353.8 347.9,350.3 347.9,354.3" fill="#ff4500"/>
<polygon points="369.5,342.2 375.1,336.3 375.1,332.3 371.1,335.8 371.1,327.8 367.9,327.8 367.9,335.8 363.9,332.3 363.9,336.3" fill="#ff4500"/>
<polygon points="377.5,335.2 383.1,329.3 383.1,325.3 379.1,328.8 379.1,320.8 375.9,320.8 375.9,328.8 371.9,325.3 371.9,329.3" fill="#ff4500"/>
<polygon points="409.5,320.2 415.1,314.3 415.1,310.3 411.1,313.8 411.1,305.8 407.9,305.8 407.9,313.8 403.9,310.3 403.9,314.3" fill="#ff4500"/>
<polygon points="417.5,317.2 423.1,311.3 423.1,307.3 419.1,310.8 419.1,302.8 415.9,302.8 415.9,310.8 411.9,307.3 411.9,311.3" fill="#ff4500"/>
<polygon points="433.5,297.2 439.1,291.3 439.1,287.3 435.1,290.8 435.1,282.8 431.9,282.8 431.9,290.8 427.9,287.3 427.9,291.3" fill="#ff4500"/>
<polygon points="465.5,289.2 471.1,283.3 471.1,279.3 467.1,282.8 467.1,274.8 463.9,274.8 463.9,282.8 459.9,279.3 459.9,283.3" fill="#ff4500"/>
<polygon points="482.5,196.2 488.1,190.3 488.1,186.3 484.1,189.8 484.1,181.8 480.9,181.8 480.9,189.8 476.9,186.3 476.9,190.3" fill="#ff4500"/>
<polygon points="514.5,100.2 520.1,94.3 520.1,90.3 516.1,93.8 516.1,85.8 512.9,85.8 512.9,93.8 508.9,90.3 508.9,94.3" fill="#ff4500"/>
<polygon points="617.5,156.2 623.1,150.3 623.1,146.3 619.1,149.8 619.1,141.8 615.9,141.8 615.9,149.8 611.9,146.3 611.9,150.3" fill="#ff4500"/>
<polygon points="641.5,145.2 647.1,139.3 647.1,135.3 643.1,138.8 643.1,130.8 639.9,130.8 639.9,138.8 635.9,135.3 635.9,139.3" fill="#ff4500"/>
<polygon points="649.5,125.2 655.1,119.3 655.1,115.3 651.1,118.8 651.1,110.8 647.9,110.8 647.9,118.8 643.9,115.3 643.9,119.3" fill="#ff4500"/>
<polygon points="657.5,95.2 663.1,89.3 663.1,85.3 659.1,88.8 659.1,80.8 655.9,80.8 655.9,88.8 651.9,85.3 651.9,89.3" fill="#ff4500"/>
<polygon points="857.5,288.2 863.1,282.3 863.1,278.3 859.1,281.8 859.1,273.8 855.9,273.8 855.9,281.8 851.9,278.3 851.9,282.3" fill="#ff4500"/>
<polygon points="88.5,449.8 94.1,455.7 94.1,459.7 90.1,456.2 90.1,464.2 86.9,464.2 86.9,456.2 82.9,459.7 82.9,455.7" fill="#4169e1"/>
<polygon points="152.5,427.8 158.1,433.7 158.1,437.7 154.1,434.2 154.1,442.2 150.9,442.2 150.9,434.2 146.9,437.7 146.9,433.7" fill="#4169e1"/>
<polygon points="160.5,444.8 166.1,450.7 166.1,454.7 162.1,451.2 162.1,459.2 158.9,459.2 158.9,451.2 154.9,454.7 154.9,450.7" fill="#4169e1"/>
<polygon points="192.5,447.8 198.1,453.7 198.1,457.7 194.1,454.2 194.1,462.2 190.9,462.2 190.9,454.2 186.9,457.7 186.9,453.7" fill="#4169e1"/>
<polygon points="248.5,455.8 254.1,461.7 254.1,465.7 250.1,462.2 250.1,470.2 246.9,470.2 246.9,462.2 242.9,465.7 242.9,461.7" fill="#4169e1"/>
<polygon points="320.5,473.8 326.1,479.7 326.1,483.7 322.1,480.2 322.1,488.2 318.9,488.2 318.9,480.2 314.9,483.7 314.9,479.7" fill="#4169e1"/>
<polygon points="544.5,174.8 550.1,180.7 550.1,184.7 546.1,181.2 546.1,189.2 542.9,189.2 542.9,181.2 538.9,184.7 538.9,180.7" fill="#4169e1"/>
<polygon points="552.5,191.8 558.1,197.7 558.1,201.7 554.1,198.2 554.1,206.2 550.9,206.2 550.9,198.2 546.9,201.7 546.9,197.7" fill="#4169e1"/>
<polygon points="560.5,209.8 566.1,215.7 566.1,219.7 562.1,216.2 562.1,224.2 558.9,224.2 558.9,216.2 554.9,219.7 554.9,215.7" fill="#4169e1"/>
<polygon points="695.5,152.8 701.1,158.7 701.1,162.7 697.1,159.2 697.1,167.2 693.9,167.2 693.9,159.2 689.9,162.7 689.9,158.7" fill="#4169e1"/>
<polygon points="705.5,151.8 711.1,157.7 711.1,161.7 707.1,158.2 707.1,166.2 703.9,166.2 703.9,158.2 699.9,161.7 699.9,157.7" fill="#4169e1"/>
<polygon points="712.5,178.8 718.1,184.7 718.1,188.7 714.1,185.2 714.1,193.2 710.9,193.2 710.9,185.2 706.9,188.7 706.9,184.7" fill="#4169e1"/>
<polygon points="736.5,170.8 742.1,176.7 742.1,180.7 738.1,177.2 738.1,185.2 734.9,185.2 734.9,177.2 730.9,180.7 730.9,176.7" fill="#4169e1"/>
<polygon points="744.5,192.8 750.1,198.7 750.1,202.7 746.1,199.2 746.1,207.2 742.9,207.2 742.9,199.2 738.9,202.7 738.9,198.7" fill="#4169e1"/>
<polygon points="752.5,204.8 758.1,210.7 758.1,214.7 754.1,211.2 754.1,219.2 750.9,219.2 750.9,211.2 746.9,214.7 746.9,210.7" fill="#4169e1"/>
<polygon points="776.5,279.8 782.1,285.7 782.1,289.7 778.1,286.2 778.1,294.2 774.9,294.2 774.9,286.2 770.9,289.7 770.9,285.7" fill="#4169e1"/>
<polygon points="784.5,332.8 790.1,338.7 790.1,342.7 786.1,339.2 786.1,347.2 782.9,347.2 782.9,339.2 778.9,342.7 778.9,338.7" fill="#4169e1"/>
<polygon points="808.5,420.8 814.1,426.7 814.1,430.7 810.1,427.2 810.1,435.2 806.9,435.2 806.9,427.2 802.9,430.7 802.9,426.7" fill="#4169e1"/>
<polygon points="816.5,426.8 822.1,432.7 822.1,436.7 818.1,433.2 818.1,441.2 814.9,441.2 814.9,433.2 810.9,436.7 810.9,432.7" fill="#4169e1"/>
<path d="M36.3,482.2L42.5,475.7L48.7,482.2M42.5,475.7V488.3" fill="none" stroke="#e39a35" stroke-width="1.1"/>
<path d="M35.199999999999996,482.0L41.4,475.5L47.6,482.0M41.4,475.5V488.1" fill="none" stroke="#ffffff" stroke-width="1.7"/>
<path d="M60.3,476.2L66.5,469.7L72.7,476.2M66.5,469.7V482.3" fill="none" stroke="#e39a35" stroke-width="1.1"/>
<path d="M59.2,476.0L65.4,469.5L71.60000000000001,476.0M65.4,469.5V482.1" fill="none" stroke="#ffffff" stroke-width="1.7"/>
<path d="M68.3,470.2L74.5,463.7L80.7,470.2M74.5,463.7V476.3" fill="none" stroke="#e39a35" stroke-width="1.1"/>
<path d="M67.2,470.0L73.4,463.5L79.60000000000001,470.0M73.4,463.5V476.1" fill="none" stroke="#ffffff" stroke-width="1.7"/>
<path d="M76.3,466.2L82.5,459.7L88.7,466.2M82.5,459.7V472.3" fill="none" stroke="#e39a35" stroke-width="1.1"/>
<path d="M75.2,466.0L81.4,459.5L87.60000000000001,466.0M81.4,459.5V472.1" fill="none" stroke="#ffffff" stroke-width="1.7"/>
<path d="M100.3,457.2L106.5,450.7L112.7,457.2M106.5,450.7V463.3" fill="none" stroke="#e39a35" stroke-width="1.1"/>
<path d="M99.2,457.0L105.4,450.5L111.60000000000001,457.0M105.4,450.5V463.1" fill="none" stroke="#ffffff" stroke-width="1.7"/>
<path d="M116.3,450.2L122.5,443.7L128.7,450.2M122.5,443.7V456.3" fill="none" stroke="#e39a35" stroke-width="1.1"/>
<path d="M115.2,450.0L121.4,443.5L127.60000000000001,450.0M121.4,443.5V456.1" fill="none" stroke="#ffffff" stroke-width="1.7"/>
<path d="M364.3,429.2L370.5,422.7L376.7,429.2M370.5,422.7V435.3" fill="none" stroke="#e39a35" stroke-width="1.1"/>
<path d="M363.2,429.0L369.4,422.5L375.59999999999997,429.0M369.4,422.5V435.1" fill="none" stroke="#ffffff" stroke-width="1.7"/>
<path d="M372.3,414.2L378.5,407.7L384.7,414.2M378.5,407.7V420.3" fill="none" stroke="#e39a35" stroke-width="1.1"/>
<path d="M371.2,414.0L377.4,407.5L383.59999999999997,414.0M377.4,407.5V420.1" fill="none" stroke="#ffffff" stroke-width="1.7"/>
<path d="M380.3,405.2L386.5,398.7L392.7,405.2M386.5,398.7V411.3" fill="none" stroke="#e39a35" stroke-width="1.1"/>
<path d="M379.2,405.0L385.4,398.5L391.59999999999997,405.0M385.4,398.5V411.1" fill="none" stroke="#ffffff" stroke-width="1.7"/>
<path d="M388.3,394.2L394.5,387.7L400.7,394.2M394.5,387.7V400.3" fill="none" stroke="#e39a35" stroke-width="1.1"/>
<path d="M387.2,394.0L393.4,387.5L399.59999999999997,394.0M393.4,387.5V400.1" fill="none" stroke="#ffffff" stroke-width="1.7"/>
<path d="M396.3,387.2L402.5,380.7L408.7,387.2M402.5,380.7V393.3" fill="none" stroke="#e39a35" stroke-width="1.1"/>
<path d="M395.2,387.0L401.4,380.5L407.59999999999997,387.0M401.4,380.5V393.1" fill="none" stroke="#ffffff" stroke-width="1.7"/>
<path d="M404.3,381.2L410.5,374.7L416.7,381.2M410.5,374.7V387.3" fill="none" stroke="#e39a35" stroke-width="1.1"/>
<path d="M403.2,381.0L409.4,374.5L415.59999999999997,381.0M409.4,374.5V387.1" fill="none" stroke="#ffffff" stroke-width="1.7"/>
<path d="M412.3,371.2L418.5,364.7L424.7,371.2M418.5,364.7V377.3" fill="none" stroke="#e39a35" stroke-width="1.1"/>
<path d="M411.2,371.0L417.4,364.5L423.59999999999997,371.0M417.4,364.5V377.1" fill="none" stroke="#ffffff" stroke-width="1.7"/>
<path d="M436.3,364.2L442.5,357.7L448.7,364.2M442.5,357.7V370.3" fill="none" stroke="#e39a35" stroke-width="1.1"/>
<path d="M435.2,364.0L441.4,357.5L447.59999999999997,364.0M441.4,357.5V370.1" fill="none" stroke="#ffffff" stroke-width="1.7"/>
<path d="M468.3,355.2L474.5,348.7L480.7,355.2M474.5,348.7V361.3" fill="none" stroke="#e39a35" stroke-width="1.1"/>
<path d="M467.2,355.0L473.4,348.5L479.59999999999997,355.0M473.4,348.5V361.1" fill="none" stroke="#ffffff" stroke-width="1.7"/>
<path d="M476.3,341.2L482.5,334.7L488.7,341.2M482.5,334.7V347.3" fill="none" stroke="#e39a35" stroke-width="1.1"/>
<path d="M475.2,341.0L481.4,334.5L487.59999999999997,341.0M481.4,334.5V347.1" fill="none" stroke="#ffffff" stroke-width="1.7"/>
<path d="M484.3,299.2L490.5,292.7L496.7,299.2M490.5,292.7V305.3" fill="none" stroke="#e39a35" stroke-width="1.1"/>
<path d="M483.2,299.0L489.4,292.5L495.59999999999997,299.0M489.4,292.5V305.1" fill="none" stroke="#ffffff" stroke-width="1.7"/>
<path d="M492.3,252.2L498.5,245.7L504.7,252.2M498.5,245.7V258.3" fill="none" stroke="#e39a35" stroke-width="1.1"/>
<path d="M491.2,252.0L497.4,245.5L503.59999999999997,252.0M497.4,245.5V258.1" fill="none" stroke="#ffffff" stroke-width="1.7"/>
<path d="M500.3,235.2L506.5,228.7L512.7,235.2M506.5,228.7V241.29999999999998" fill="none" stroke="#e39a35" stroke-width="1.1"/>
<path d="M499.2,235.0L505.4,228.5L511.59999999999997,235.0M505.4,228.5V241.1" fill="none" stroke="#ffffff" stroke-width="1.7"/>
<path d="M508.3,219.2L514.5,212.7L520.7,219.2M514.5,212.7V225.29999999999998" fill="none" stroke="#e39a35" stroke-width="1.1"/>
<path d="M507.2,219.0L513.4,212.5L519.6,219.0M513.4,212.5V225.1" fill="none" stroke="#ffffff" stroke-width="1.7"/>
<path d="M516.3,206.2L522.5,199.7L528.7,206.2M522.5,199.7V212.29999999999998" fill="none" stroke="#e39a35" stroke-width="1.1"/>
<path d="M515.1999999999999,206.0L521.4,199.5L527.6,206.0M521.4,199.5V212.1" fill="none" stroke="#ffffff" stroke-width="1.7"/>
<path d="M524.3,201.2L530.5,194.7L536.7,201.2M530.5,194.7V207.29999999999998" fill="none" stroke="#e39a35" stroke-width="1.1"/>
<path d="M523.1999999999999,201.0L529.4,194.5L535.6,201.0M529.4,194.5V207.1" fill="none" stroke="#ffffff" stroke-width="1.7"/>
<path d="M636.3,198.2L642.5,191.7L648.7,198.2M642.5,191.7V204.29999999999998" fill="none" stroke="#e39a35" stroke-width="1.1"/>
<path d="M635.1999999999999,198.0L641.4,191.5L647.6,198.0M641.4,191.5V204.1" fill="none" stroke="#ffffff" stroke-width="1.7"/>
<path d="M644.3,192.2L650.5,185.7L656.7,192.2M650.5,185.7V198.29999999999998" fill="none" stroke="#e39a35" stroke-width="1.1"/>
<path d="M643.1999999999999,192.0L649.4,185.5L655.6,192.0M649.4,185.5V198.1" fill="none" stroke="#ffffff" stroke-width="1.7"/>
<path d="M652.3,181.2L658.5,174.7L664.7,181.2M658.5,174.7V187.29999999999998" fill="none" stroke="#e39a35" stroke-width="1.1"/>
<path d="M651.1999999999999,181.0L657.4,174.5L663.6,181.0M657.4,174.5V187.1" fill="none" stroke="#ffffff" stroke-width="1.7"/>
<path d="M660.3,170.2L666.5,163.7L672.7,170.2M666.5,163.7V176.29999999999998" fill="none" stroke="#e39a35" stroke-width="1.1"/>
<path d="M659.1999999999999,170.0L665.4,163.5L671.6,170.0M665.4,163.5V176.1" fill="none" stroke="#ffffff" stroke-width="1.7"/>
<path d="M668.3,165.2L674.5,158.7L680.7,165.2M674.5,158.7V171.29999999999998" fill="none" stroke="#e39a35" stroke-width="1.1"/>
<path d="M667.1999999999999,165.0L673.4,158.5L679.6,165.0M673.4,158.5V171.1" fill="none" stroke="#ffffff" stroke-width="1.7"/>
<path d="M676.3,160.2L682.5,153.7L688.7,160.2M682.5,153.7V166.29999999999998" fill="none" stroke="#e39a35" stroke-width="1.1"/>
<path d="M675.1999999999999,160.0L681.4,153.5L687.6,160.0M681.4,153.5V166.1" fill="none" stroke="#ffffff" stroke-width="1.7"/>
<path d="M876.3,278.2L882.5,271.7L888.7,278.2M882.5,271.7V284.3" fill="none" stroke="#e39a35" stroke-width="1.1"/>
<path d="M875.1999999999999,278.0L881.4,271.5L887.6,278.0M881.4,271.5V284.1" fill="none" stroke="#ffffff" stroke-width="1.7"/>
<path d="M748.3,161.3L754.5,167.8L760.7,161.3M754.5,167.8V155.20000000000002" fill="none" stroke="#e39a35" stroke-width="1.1"/>
<path d="M747.1999999999999,161.5L753.4,168L759.6,161.5M753.4,168V155.4" fill="none" stroke="#ffffff" stroke-width="1.7"/>
<path d="M756.3,167.3L762.5,173.8L768.7,167.3M762.5,173.8V161.20000000000002" fill="none" stroke="#e39a35" stroke-width="1.1"/>
<path d="M755.1999999999999,167.5L761.4,174L767.6,167.5M761.4,174V161.4" fill="none" stroke="#ffffff" stroke-width="1.7"/>
<path d="M764.3,174.3L770.5,180.8L776.7,174.3M770.5,180.8V168.20000000000002" fill="none" stroke="#e39a35" stroke-width="1.1"/>
<path d="M763.1999999999999,174.5L769.4,181L775.6,174.5M769.4,181V168.4" fill="none" stroke="#ffffff" stroke-width="1.7"/>
<path d="M773.3,190.3L779.5,196.8L785.7,190.3M779.5,196.8V184.20000000000002" fill="none" stroke="#e39a35" stroke-width="1.1"/>
<path d="M772.1999999999999,190.5L778.4,197L784.6,190.5M778.4,197V184.4" fill="none" stroke="#ffffff" stroke-width="1.7"/>
<path d="M781.3,220.3L787.5,226.8L793.7,220.3M787.5,226.8V214.20000000000002" fill="none" stroke="#e39a35" stroke-width="1.1"/>
<path d="M780.1999999999999,220.5L786.4,227L792.6,220.5M786.4,227V214.4" fill="none" stroke="#ffffff" stroke-width="1.7"/>
<path d="M804.3,241.3L810.5,247.8L816.7,241.3M810.5,247.8V235.20000000000002" fill="none" stroke="#e39a35" stroke-width="1.1"/>
<path d="M803.1999999999999,241.5L809.4,248L815.6,241.5M809.4,248V235.4" fill="none" stroke="#ffffff" stroke-width="1.7"/>
<path d="M812.3,266.3L818.5,272.8L824.7,266.3M818.5,272.8V260.2" fill="none" stroke="#e39a35" stroke-width="1.1"/>
<path d="M811.1999999999999,266.5L817.4,273L823.6,266.5M817.4,273V260.4" fill="none" stroke="#ffffff" stroke-width="1.7"/>
<path d="M820.3,271.3L826.5,277.8L832.7,271.3M826.5,277.8V265.2" fill="none" stroke="#e39a35" stroke-width="1.1"/>
<path d="M819.1999999999999,271.5L825.4,278L831.6,271.5M825.4,278V265.4" fill="none" stroke="#ffffff" stroke-width="1.7"/>
</g>
<g clip-path="url(#c2)">
<line x1="0" y1="700.5" x2="1084" y2="700.5" stroke="#c0c0c0" stroke-width="1"/>
<line x1="0" y1="804.5" x2="1084" y2="804.5" stroke="#c0c0c0" stroke-width="1"/>
<line x1="0" y1="712" x2="1084" y2="712" stroke="#dc143c" stroke-width="2"/>
<line x1="0" y1="792" x2="1084" y2="792" stroke="#dc143c" stroke-width="2"/>
<polyline points="0,754.6 7.8,742.8 16.6,715.4 24.5,705.7 33.3,735 41.1,699.8 48.9,807.4 56.8,766.3 64.6,764.4 72.4,735 80.2,776.1 89,794.7 97.9,713.5 105.7,699.8 113.5,758.5 121.4,754.6 129.2,750.7 137,793.7 144.8,766.3 153.6,785.9 161.5,780 169.3,695.9 177.1,731.1 185,764.4 192.8,799.6 201.6,705.7 209.4,735 217,774.2 224.9,778.1 232.9,782 240.9,724.3 249,776.1 257,730.1 265,730.1 273,741.9 281,715.4 289.1,700.8 296.9,748.7 304.9,807.4 313,725.2 321,772.2 329,742.8 337,700.8 345,715.4 352.9,698.8 360.9,747.7 368.9,729.1 377,695.9 385,740.9 393,777.1 400.8,772.2 408.9,711.5 416.9,705.7 425.1,805.5 432.9,695.9 440.9,697.8 449,715.4 457,776.1 465,695.9 473,739.9 480.9,698.8 488.9,695.9 496.9,729.1 504.9,778.1 513,717.4 521,782 529,805.5 537,791.8 545.1,760.5 552.9,793.7 560.9,779.1 568.9,799.6 577,737 585,746.8 593,746.8 600.9,735 608.9,748.7 616.9,699.8 624.9,784 633,717.4 641,695.9 649,728.2 657,707.6 665,723.3 673,763.4 680.9,727.2 688.9,791.8 696.9,781 705,787.9 713,765.4 721,803.5 729,732.1 737.1,779.1 745.1,782 752.9,746.8 760.9,744.8 769,743.8 777,805.5 785,795.7 793,698.8 801.1,762.4 809.1,787.9 817.1,791.8 825.1,719.4 833,714.5 841,776 849,758 857,699 865,725.2 873,705.5 881,710.3" fill="none" stroke="#ffff00" stroke-width="2" shape-rendering="crispEdges"/>
<polyline points="0,739 7.8,729.1 16.6,711.5 24.5,704.7 33.3,772.2 41.1,726.2 48.9,797.7 56.8,754.6 64.6,752.6 73.4,725.2 82.2,780 90,778.1 97.9,715.4 105.7,709.6 113.5,772.2 121.4,766.3 128.2,754.6 137,795.7 144.8,745.8 153.6,768.3 162.5,748.7 170.3,707.6 178.1,754.6 185.9,778.1 193.8,789.8 201.6,721.3 210.4,742.8 217,776.1 224.9,779.1 232.9,782 240.9,715.4 249,772.2 257,731.1 265,731.1 273,755.6 281,727.2 289.1,710.6 296.9,758.5 304.9,793.7 313,723.3 321,769.3 329,744.8 337,722.3 345,742.8 352.9,727.2 360.9,776.1 368.9,754.6 377,721.3 385,768.3 393,790.8 400.8,775.1 408.9,719.4 416.9,715.4 425.1,787.9 432.9,730.1 440.9,732.1 449,752.6 457,789.8 465,730.1 473,761.4 480.9,733.1 488.9,731.1 496.9,760.5 504.9,796.7 513,737 521,778.1 529,785.9 537,754.6 545.1,726.2 552.9,772.2 560.9,744.8 568.9,772.2 577,717.4 585,735 593,736 600.9,715.4 608.9,768.3 616.9,713.5 624.9,778.1 633,740.9 641,723.3 649,756.5 657,737 665,762.4 673,789.8 680.9,740.9 688.9,781 696.9,767.3 705,774.2 713,732.1 721,777.1 729,721.3 737.1,763.4 745.1,765.4 752.9,725.2 760.9,724.3 769,724.3 777,793.7 785,778.1 793,713.5 801.1,761.4 809.1,776.1 817.1,779.1 825.1,715.4 833,714.4 841,780.6 849,752 857,715 865,749 873,729.3 881,744.2" fill="none" stroke="#1e90ff" stroke-width="2" shape-rendering="crispEdges"/>
<polyline points="1.5,700.5 9.5,804 17.5,700.5 25.5,700.5 33.5,700.5 41.5,700.5 49.5,804 57.5,700.5 65.5,804 73.5,700.5 81.5,804 89.5,804 97.5,700.5 105.5,700.5 113.5,804 121.5,700.5 129.5,804 137.5,804 145.5,700.5 153.5,804 161.5,804 169.5,700.5 177.5,700.5 185.5,804 193.5,804 201.5,700.5 209.5,700.5 217.5,804 225.5,804 233.5,804 241.5,700.5 249.5,804 257.5,700.5 265.5,804 273.5,804 281.5,700.5 289.5,700.5 297.5,804 305.5,804 313.5,700.5 321.5,804 329.5,700.5 337.5,700.5 345.5,700.5 353.5,700.5 361.5,804 369.5,700.5 377.5,700.5 385.5,752.25 393.5,804 401.5,700.5 409.5,700.5 417.5,700.5 425.5,804 433.5,700.5 441.5,804 449.5,804 457.5,804 465.5,700.5 473.5,700.5 481.5,700.5 489.5,700.5 497.5,804 505.5,804 513.5,700.5 521.5,804 529.5,804 537.5,700.5 545.5,700.5 553.5,804 561.5,804 569.5,804 577.5,700.5 585.5,804 593.5,700.5 601.5,804 609.5,700.5 617.5,700.5 625.5,804 633.5,700.5 641.5,700.5 649.5,700.5 657.5,700.5 665.5,804 673.5,804 681.5,700.5 689.5,804 697.5,700.5 705.5,804 713.5,804 721.5,804 729.5,700.5 737.5,804 745.5,804 753.5,804 761.5,804 769.5,804 777.5,804 785.5,804 793.5,700.5 801.5,804 809.5,804 817.5,804 825.5,700.5 833.5,700.5 841.5,804 849.5,700.5 857.5,700.5 865.5,804 873.5,700.5 881.5,700.5" fill="none" stroke="#ff0000" stroke-width="2.2" stroke-linejoin="bevel" shape-rendering="crispEdges"/>
</g>
<line x1="0" y1="882.5" x2="1084" y2="882.5" stroke="#c0c0c0" stroke-width="1"/>
<line x1="0" y1="890.5" x2="1084" y2="890.5" stroke="#c0c0c0" stroke-width="1"/>
<polyline points="0,887.3 8,890 16,888.9 24,883.3 32,876.9 41.2,870.4 49.2,878.5 57.2,876.5 65.3,876.5 73.3,874.5 81.3,879.3 89.3,881.3 97.3,875.3 105.3,868 114.1,873.3 122.1,872.5 130.1,872.5 138.1,880.5 146.1,877.3 154.1,880.9 162.1,884.9 170.1,880.5 178.1,878.9 186.1,882.1 194.2,890.1 202.2,878.1 210.2,876.5 218.2,876.5 226.2,881.3 234.2,885.3 242.2,880.5 250.2,892.5 258.2,888.5 266.2,892.1 274.2,892.1 282.2,886.1 290.2,879.7 298.2,888.1 306.2,895.3 314.3,887.3 322.3,896.1 330.3,887.3 338.3,880.5 346.3,880.5 354.3,870.4 362.3,875.3 370.3,871.2 378.3,866.4 386.3,866.4 394.3,873.3 402.3,872.5 410.3,867.2 418.3,864.8 426.3,882.1 434.3,867.2 448,869.2 456.8,874.9 464.8,868.4 472.8,867.2 480.8,855.2 488.8,843.2 496.8,850.8 504.9,858.4 512.9,856 520.9,860.8 528.9,869.2 536.9,868.4 544.9,868.4 552.9,874 560.9,875.3 568.9,878.5 576.9,877.3 584.9,879.3 592.9,878.5 600.9,880.5 608.9,877.3 616.9,869.2 624.9,879.3 633,874.5 641,869.2 649,868 657,862 665,863.2 673,869.2 681,868.4 689,876.1 697,875.3 705,877.3 713,881.3 721,886.1 729,880.5 737,885.3 745,888.1 753,888.9 761,892.9 769.1,894.1 777.1,912.1 785.1,918.1 793.1,892.5 801.1,900.5 809.1,914.1 817.1,916.1 825.1,900.1 833.1,898.1 841.1,901.3 849.1,900.5 857.1,893.3 865.1,893.3 873.1,889.3 881.2,883.3" fill="none" stroke="#1e90ff" stroke-width="1"/>
<path d="M-1,38.5H1084.5V691.5H-1" fill="none" stroke="#fff" stroke-width="1"/>
<path d="M-1,693.5H1084.5V810.5H-1" fill="none" stroke="#fff" stroke-width="1"/>
<path d="M-1,812.5H1084.5V959.5H-1" fill="none" stroke="#fff" stroke-width="1"/>
<line x1="1085" y1="67.5" x2="1088" y2="67.5" stroke="#fff" stroke-width="1"/>
<text x="1090.6" y="71" font-size="10" fill="#fff" textLength="32.3" font-family="Liberation Sans" lengthAdjust="spacingAndGlyphs">144.605</text>
<line x1="1085" y1="103.5" x2="1088" y2="103.5" stroke="#fff" stroke-width="1"/>
<text x="1090.6" y="107" font-size="10" fill="#fff" textLength="32.3" font-family="Liberation Sans" lengthAdjust="spacingAndGlyphs">144.585</text>
<line x1="1085" y1="139.5" x2="1088" y2="139.5" stroke="#fff" stroke-width="1"/>
<text x="1090.6" y="143" font-size="10" fill="#fff" textLength="32.3" font-family="Liberation Sans" lengthAdjust="spacingAndGlyphs">144.565</text>
<line x1="1085" y1="175.5" x2="1088" y2="175.5" stroke="#fff" stroke-width="1"/>
<text x="1090.6" y="179" font-size="10" fill="#fff" textLength="32.3" font-family="Liberation Sans" lengthAdjust="spacingAndGlyphs">144.545</text>
<line x1="1085" y1="211.5" x2="1088" y2="211.5" stroke="#fff" stroke-width="1"/>
<text x="1090.6" y="215" font-size="10" fill="#fff" textLength="32.3" font-family="Liberation Sans" lengthAdjust="spacingAndGlyphs">144.525</text>
<line x1="1085" y1="247.5" x2="1088" y2="247.5" stroke="#fff" stroke-width="1"/>
<text x="1090.6" y="251" font-size="10" fill="#fff" textLength="32.3" font-family="Liberation Sans" lengthAdjust="spacingAndGlyphs">144.505</text>
<line x1="1085" y1="283.5" x2="1088" y2="283.5" stroke="#fff" stroke-width="1"/>
<text x="1090.6" y="287" font-size="10" fill="#fff" textLength="32.3" font-family="Liberation Sans" lengthAdjust="spacingAndGlyphs">144.485</text>
<line x1="1085" y1="319.5" x2="1088" y2="319.5" stroke="#fff" stroke-width="1"/>
<text x="1090.6" y="323" font-size="10" fill="#fff" textLength="32.3" font-family="Liberation Sans" lengthAdjust="spacingAndGlyphs">144.465</text>
<line x1="1085" y1="355.5" x2="1088" y2="355.5" stroke="#fff" stroke-width="1"/>
<text x="1090.6" y="359" font-size="10" fill="#fff" textLength="32.3" font-family="Liberation Sans" lengthAdjust="spacingAndGlyphs">144.445</text>
<line x1="1085" y1="392.5" x2="1088" y2="392.5" stroke="#fff" stroke-width="1"/>
<text x="1090.6" y="396" font-size="10" fill="#fff" textLength="32.3" font-family="Liberation Sans" lengthAdjust="spacingAndGlyphs">144.425</text>
<line x1="1085" y1="428.5" x2="1088" y2="428.5" stroke="#fff" stroke-width="1"/>
<text x="1090.6" y="432" font-size="10" fill="#fff" textLength="32.3" font-family="Liberation Sans" lengthAdjust="spacingAndGlyphs">144.405</text>
<line x1="1085" y1="464.5" x2="1088" y2="464.5" stroke="#fff" stroke-width="1"/>
<text x="1090.6" y="468" font-size="10" fill="#fff" textLength="32.3" font-family="Liberation Sans" lengthAdjust="spacingAndGlyphs">144.385</text>
<line x1="1085" y1="500.5" x2="1088" y2="500.5" stroke="#fff" stroke-width="1"/>
<text x="1090.6" y="504" font-size="10" fill="#fff" textLength="32.3" font-family="Liberation Sans" lengthAdjust="spacingAndGlyphs">144.365</text>
<line x1="1085" y1="536.5" x2="1088" y2="536.5" stroke="#fff" stroke-width="1"/>
<text x="1090.6" y="540" font-size="10" fill="#fff" textLength="32.3" font-family="Liberation Sans" lengthAdjust="spacingAndGlyphs">144.345</text>
<line x1="1085" y1="572.5" x2="1088" y2="572.5" stroke="#fff" stroke-width="1"/>
<text x="1090.6" y="576" font-size="10" fill="#fff" textLength="32.3" font-family="Liberation Sans" lengthAdjust="spacingAndGlyphs">144.325</text>
<line x1="1085" y1="608.5" x2="1088" y2="608.5" stroke="#fff" stroke-width="1"/>
<text x="1090.6" y="612" font-size="10" fill="#fff" textLength="32.3" font-family="Liberation Sans" lengthAdjust="spacingAndGlyphs">144.305</text>
<line x1="1085" y1="644.5" x2="1088" y2="644.5" stroke="#fff" stroke-width="1"/>
<text x="1090.6" y="648" font-size="10" fill="#fff" textLength="32.3" font-family="Liberation Sans" lengthAdjust="spacingAndGlyphs">144.285</text>
<line x1="1085" y1="680.5" x2="1088" y2="680.5" stroke="#fff" stroke-width="1"/>
<text x="1090.6" y="684" font-size="10" fill="#fff" textLength="32.3" font-family="Liberation Sans" lengthAdjust="spacingAndGlyphs">144.265</text>
<rect x="1086" y="230" width="40" height="11" fill="#fff"/>
<text x="1090.6" y="239" font-size="10" fill="#000" textLength="32.3" font-family="Liberation Sans" lengthAdjust="spacingAndGlyphs">144.512</text>
<rect x="1086" y="695" width="12" height="11" fill="#c8c8c8"/>
<text x="1087" y="704" font-size="10" fill="#000" textLength="10" font-family="Liberation Sans" lengthAdjust="spacingAndGlyphs">95</text>
<text x="1098.5" y="704" font-size="10" fill="#fff" textLength="5" font-family="Liberation Sans" lengthAdjust="spacingAndGlyphs">0</text>
<rect x="1086" y="707" width="12" height="11" fill="#dc143c"/>
<text x="1087" y="716" font-size="10" fill="#000" textLength="10" font-family="Liberation Sans" lengthAdjust="spacingAndGlyphs">85</text>
<rect x="1086" y="787" width="12" height="11" fill="#dc143c"/>
<text x="1087" y="796" font-size="10" fill="#000" textLength="10" font-family="Liberation Sans" lengthAdjust="spacingAndGlyphs">15</text>
<rect x="1086" y="799" width="7" height="11" fill="#c8c8c8"/>
<text x="1087" y="808" font-size="10" fill="#000" textLength="5" font-family="Liberation Sans" lengthAdjust="spacingAndGlyphs">5</text>
<line x1="1085" y1="814.5" x2="1087" y2="814.5" stroke="#fff"/>
<text x="1088.6" y="823" font-size="10" fill="#fff" textLength="14.3" font-family="Liberation Sans" lengthAdjust="spacingAndGlyphs">100</text>
<rect x="1086" y="877" width="12" height="19" fill="#c8c8c8"/>
<text x="1087" y="886" font-size="10" fill="#000" textLength="10" font-family="Liberation Sans" lengthAdjust="spacingAndGlyphs">53</text>
<text x="1087" y="895" font-size="10" fill="#000" textLength="10" font-family="Liberation Sans" lengthAdjust="spacingAndGlyphs">47</text>
<text x="1088.6" y="956" font-size="10" fill="#fff" textLength="5" font-family="Liberation Sans" lengthAdjust="spacingAndGlyphs">0</text>
<line x1="-14.5" y1="960" x2="-14.5" y2="963" stroke="#fff" stroke-width="1"/>
<text x="-16.6" y="972" font-size="9.6" fill="#fff" textLength="50" font-family="Liberation Sans" lengthAdjust="spacingAndGlyphs">5 Feb 11:17</text>
<line x1="49.5" y1="960" x2="49.5" y2="963" stroke="#fff" stroke-width="1"/>
<text x="47.4" y="972" font-size="9.6" fill="#fff" textLength="50" font-family="Liberation Sans" lengthAdjust="spacingAndGlyphs">5 Feb 11:25</text>
<line x1="113.5" y1="960" x2="113.5" y2="963" stroke="#fff" stroke-width="1"/>
<text x="111.4" y="972" font-size="9.6" fill="#fff" textLength="50" font-family="Liberation Sans" lengthAdjust="spacingAndGlyphs">5 Feb 11:33</text>
<line x1="177.5" y1="960" x2="177.5" y2="963" stroke="#fff" stroke-width="1"/>
<text x="175.4" y="972" font-size="9.6" fill="#fff" textLength="50" font-family="Liberation Sans" lengthAdjust="spacingAndGlyphs">5 Feb 11:41</text>
<line x1="241.5" y1="960" x2="241.5" y2="963" stroke="#fff" stroke-width="1"/>
<text x="239.4" y="972" font-size="9.6" fill="#fff" textLength="50" font-family="Liberation Sans" lengthAdjust="spacingAndGlyphs">5 Feb 11:49</text>
<line x1="305.5" y1="960" x2="305.5" y2="963" stroke="#fff" stroke-width="1"/>
<text x="303.4" y="972" font-size="9.6" fill="#fff" textLength="50" font-family="Liberation Sans" lengthAdjust="spacingAndGlyphs">5 Feb 11:57</text>
<line x1="369.5" y1="960" x2="369.5" y2="963" stroke="#fff" stroke-width="1"/>
<text x="367.4" y="972" font-size="9.6" fill="#fff" textLength="50" font-family="Liberation Sans" lengthAdjust="spacingAndGlyphs">5 Feb 12:05</text>
<line x1="433.5" y1="960" x2="433.5" y2="963" stroke="#fff" stroke-width="1"/>
<text x="431.4" y="972" font-size="9.6" fill="#fff" textLength="50" font-family="Liberation Sans" lengthAdjust="spacingAndGlyphs">5 Feb 12:13</text>
<line x1="497.5" y1="960" x2="497.5" y2="963" stroke="#fff" stroke-width="1"/>
<text x="495.4" y="972" font-size="9.6" fill="#fff" textLength="50" font-family="Liberation Sans" lengthAdjust="spacingAndGlyphs">5 Feb 12:21</text>
<line x1="561.5" y1="960" x2="561.5" y2="963" stroke="#fff" stroke-width="1"/>
<text x="559.4" y="972" font-size="9.6" fill="#fff" textLength="50" font-family="Liberation Sans" lengthAdjust="spacingAndGlyphs">5 Feb 12:29</text>
<line x1="625.5" y1="960" x2="625.5" y2="963" stroke="#fff" stroke-width="1"/>
<text x="623.4" y="972" font-size="9.6" fill="#fff" textLength="50" font-family="Liberation Sans" lengthAdjust="spacingAndGlyphs">5 Feb 12:37</text>
<line x1="689.5" y1="960" x2="689.5" y2="963" stroke="#fff" stroke-width="1"/>
<text x="687.4" y="972" font-size="9.6" fill="#fff" textLength="50" font-family="Liberation Sans" lengthAdjust="spacingAndGlyphs">5 Feb 12:45</text>
<line x1="753.5" y1="960" x2="753.5" y2="963" stroke="#fff" stroke-width="1"/>
<text x="751.4" y="972" font-size="9.6" fill="#fff" textLength="50" font-family="Liberation Sans" lengthAdjust="spacingAndGlyphs">5 Feb 12:53</text>
<line x1="817.5" y1="960" x2="817.5" y2="963" stroke="#fff" stroke-width="1"/>
<text x="815.4" y="972" font-size="9.6" fill="#fff" textLength="50" font-family="Liberation Sans" lengthAdjust="spacingAndGlyphs">5 Feb 13:01</text>
<line x1="881.5" y1="960" x2="881.5" y2="963" stroke="#fff" stroke-width="1"/>
<text x="879.4" y="972" font-size="9.6" fill="#fff" textLength="50" font-family="Liberation Sans" lengthAdjust="spacingAndGlyphs">5 Feb 13:09</text>
<text x="696.6" y="50.8" font-size="16" fill="#fff" textLength="49" font-family="Liberation Sans" lengthAdjust="spacingAndGlyphs">chance</text>
<text x="722.6" y="85" font-size="16" fill="#fff" textLength="77" font-family="Liberation Sans" lengthAdjust="spacingAndGlyphs">nextchance</text>
<text x="545.2" y="86.6" font-size="16" fill="#fff" textLength="48.2" font-family="Liberation Sans" lengthAdjust="spacingAndGlyphs">chance</text>
<text x="465" y="312.7" font-size="16" fill="#fff" textLength="48.8" font-family="Liberation Sans" lengthAdjust="spacingAndGlyphs">chance</text>
<text x="1016.1" y="677.9" font-size="12.5" fill="#fff" textLength="47.3" font-family="Liberation Sans" lengthAdjust="spacingAndGlyphs">0 m 17 s</text>
<path d="M890,39h12l-6,5z" fill="#8c96a0"/>
</svg>
<div id="sb">
  <div class="abs" style="left:0;top:1px;width:1124px;height:1px;background:#fafafa"></div>
  <div class="sep" style="left:440px"></div>
  <div class="sep" style="left:556px"></div>
  <div class="sep" style="left:659px"></div>
  <div class="sep" style="left:729px"></div>
  <div class="sep" style="left:800px"></div>
  <div class="sep" style="left:868px"></div>
  <div class="sep" style="left:937px"></div>
  <div class="sep" style="left:1003px"></div>
  <svg class="abs" style="left:0;top:0" width="1124" height="24">
    <text x="446.4" y="18" font-size="12.5" fill="#1a1a1a" font-family="Liberation Sans" textLength="37.6" lengthAdjust="spacingAndGlyphs">Default</text>
    <text x="1037" y="17.8" font-size="12" fill="#1a1a1a" font-family="Liberation Sans" textLength="67" lengthAdjust="spacingAndGlyphs">124531/10 kb</text>
    <g stroke-width="2">
      <path d="M1010,7v8M1013,7v7M1016,7v6M1019,7v5M1022,7v4M1025,7v3M1028,7v3M1031,7v2" stroke="#4f7a10"/>
      <path d="M1010,16v4M1013,15v5M1016,14v6M1019,13v7M1022,12v8M1025,11v9M1028,11v9M1031,10v10" stroke="#a01010"/>
    </g>
  </svg>
</div>
<div id="task">
  <svg class="abs" style="left:0;top:0" width="1124" height="40">
    <g fill="#76b9ed">
      <rect x="1" y="38" width="40" height="2"/><rect x="50" y="38" width="40" height="2"/><rect x="99" y="38" width="40" height="2"/>
      <rect x="148" y="38" width="40" height="2"/><rect x="197" y="38" width="40" height="2"/><rect x="246" y="38" width="40" height="2"/>
      <rect x="295" y="38" width="40" height="2"/>
    </g>
    <!-- FXDD -->
    <rect x="10" y="8" width="21" height="24" fill="#fff"/>
    <path d="M13,23 L19,12 L22,12 L16,23 Z M19,23 L25,11 L28,11 L22,23 Z" fill="#d01818"/>
    <text x="12" y="30" font-size="6" fill="#222" font-family="Liberation Sans">FXDD</text>
    <!-- X purple -->
    <path d="M73.5,12 h4 l-11.5,16 h-4 z" fill="#6a3d9a"/><path d="M62,12 h3.5 l3.5,4.5 l-1.8,2.4 z M70.6,21.6 l1.8,-2.4 l5.6,8.8 h-3.6 z" fill="#9068b8"/>
    <!-- FX -->
    <rect x="107" y="8" width="24" height="24" rx="2" fill="#d42020"/>
    <rect x="107" y="8" width="24" height="12" rx="2" fill="#e04040"/>
    <text x="109" y="26" font-size="13" font-weight="bold" fill="#fff" font-family="Liberation Sans">FX</text>
    <!-- XM -->
    <rect x="156" y="8" width="24" height="24" fill="#000"/>
    <text x="159" y="23" font-size="10" font-weight="bold" font-style="italic" fill="#fff" font-family="Liberation Sans">XM</text>
    <path d="M157,16l3,2.5l-3,2.5z" fill="#e02020"/>
    <text x="160" y="28" font-size="3.5" fill="#ccc" font-family="Liberation Sans">TRADING</text>
    <!-- LINE -->
    <rect x="205" y="8" width="24" height="24" rx="4" fill="#06c152"/>
    <ellipse cx="217" cy="19" rx="9" ry="7" fill="#fff"/>
    <path d="M214,25 l1,4 l4,-4z" fill="#fff"/>
    <text x="210.5" y="21.5" font-size="6" font-weight="bold" fill="#06c152" font-family="Liberation Sans">LINE</text>
    <!-- blue app -->
    <rect x="254" y="8" width="24" height="24" rx="3" fill="#1a86e0"/>
    <path d="M258,20 q4,-5 8,0 q2,4 -2,6 q-4,1 -5,-3" fill="none" stroke="#fff" stroke-width="2"/>
    <path d="M266,25 q6,-2 6,-12 M269,15 l3,-3 l2,4" fill="none" stroke="#fff" stroke-width="2"/>
    <!-- record -->
    <circle cx="315" cy="20" r="11" fill="#fff"/>
    <circle cx="315" cy="20" r="9" fill="#111"/>
    <circle cx="315" cy="20" r="5.5" fill="#e81010"/>
    <!-- tray -->
    <path d="M885,22.5 l6,-5.5 l6,5.5" fill="none" stroke="#fff" stroke-width="1.5"/>
    <g fill="none" stroke="#fff" stroke-width="1.2">
      <rect x="911.5" y="15.5" width="11" height="8"/>
      <rect x="907.5" y="13.5" width="3" height="3"/>
      <path d="M909,17v9 M913,26.5h8 M917,23.5v3"/>
      <path d="M932,18.5h2.5l4,-3.5v13l-4,-3.5h-2.5z"/>
      <path d="M941,18.5q1.5,2.5 0,5 M943.5,16.5q3,4.5 0,9 M946,14.5q4,6.5 0,13"/>
    </g>
    <text x="955" y="27.6" font-size="19" fill="#fff" font-family="Liberation Sans">A</text>
    <rect x="983.5" y="13.5" width="14.5" height="14" fill="#fff"/>
    <circle cx="990.7" cy="20.5" r="6" fill="#222"/>
    <text x="987.5" y="25" font-size="10" fill="#fff" font-family="Liberation Serif">J</text>
    <path d="M1090.5,12.5h16v13h-8l-4,3v-3h-4z" fill="#fff"/>
    <path d="M1093,16h11M1093,19h11M1093,22h7" stroke="#1f3346" stroke-width="1.2"/>
    <circle cx="1104" cy="25.5" r="3" fill="#1f3346" stroke="#fff" stroke-width="1"/>
  </svg>
  <div class="abs" style="left:1030px;top:5px;font-size:12px;color:#fff;line-height:14px">20:09</div>
  <div class="abs" style="left:1014px;top:22px;font-size:12px;color:#fff;line-height:14px">2021/02/05</div>
</div>
</body></html>
